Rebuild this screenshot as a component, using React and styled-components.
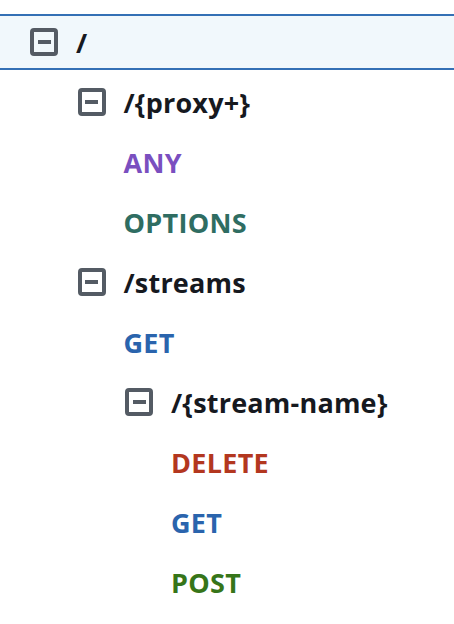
import React from 'react';
import styled, { createGlobalStyle } from 'styled-components';

const GlobalStyle = createGlobalStyle`
  body {
    margin: 0;
    background: #ffffff;
    font-family: "Open Sans", "Liberation Sans", sans-serif;
  }
`;

const METHOD_COLORS = {
  ANY: '#7a4fbf',
  OPTIONS: '#2f6d62',
  GET: '#2a64ad',
  DELETE: '#b3371f',
  POST: '#367519',
};

const Tree = styled.ul`
  list-style: none;
  margin: 0;
  padding: 14px 0 0;
`;

const Row = styled.li`
  box-sizing: border-box;
  height: 56px;
  margin-bottom: 4px;
  display: flex;
  align-items: center;
  gap: 18px;
  padding-left: ${(p) => 30 + p.depth * 47.5}px;
  background: ${(p) => (p.selected ? '#f1f8fc' : 'transparent')};
  border-top: 2px solid ${(p) => (p.selected ? '#3470b5' : 'transparent')};
  border-bottom: 2px solid ${(p) => (p.selected ? '#3470b5' : 'transparent')};
`;

const Toggle = styled.span`
  box-sizing: border-box;
  width: 28px;
  height: 28px;
  border: 4px solid #545b64;
  border-radius: 4px;
  display: flex;
  align-items: center;
  justify-content: center;
  flex-shrink: 0;

  &::after {
    content: '';
    width: 13px;
    height: 4px;
    background: #545b64;
  }
`;

const PathLabel = styled.span`
  font-size: 27px;
  font-weight: 700;
  color: #16191f;
  letter-spacing: 0.2px;
`;

const MethodLabel = styled.span`
  font-size: 27px;
  font-weight: 700;
  color: ${(p) => p.color};
  letter-spacing: 0.3px;
  margin-left: 46px;
`;

const items = [
  { type: 'path', name: '/', depth: 0, selected: true },
  { type: 'path', name: '/{proxy+}', depth: 1 },
  { type: 'method', name: 'ANY', depth: 1 },
  { type: 'method', name: 'OPTIONS', depth: 1 },
  { type: 'path', name: '/streams', depth: 1 },
  { type: 'method', name: 'GET', depth: 1 },
  { type: 'path', name: '/{stream-name}', depth: 2 },
  { type: 'method', name: 'DELETE', depth: 2 },
  { type: 'method', name: 'GET', depth: 2 },
  { type: 'method', name: 'POST', depth: 2 },
];

export default function App() {
  return (
    <>
      <GlobalStyle />
      <Tree>
        {items.map((it, i) => (
          <Row key={i} depth={it.depth} selected={it.selected}>
            {it.type === 'path' ? (
              <>
                <Toggle />
                <PathLabel>{it.name}</PathLabel>
              </>
            ) : (
              <MethodLabel color={METHOD_COLORS[it.name]}>{it.name}</MethodLabel>
            )}
          </Row>
        ))}
      </Tree>
    </>
  );
}
